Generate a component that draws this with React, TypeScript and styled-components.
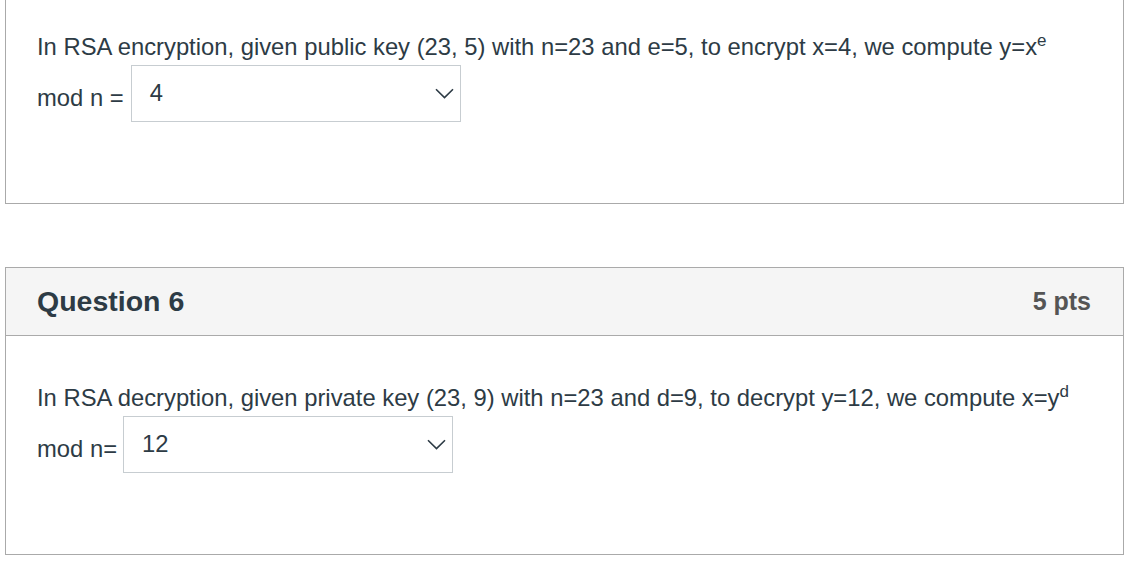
import React from "react";
import styled, { createGlobalStyle } from "styled-components";

const Global = createGlobalStyle`
  html, body { margin: 0; padding: 0; background: #ffffff; }
  body { font-family: "Liberation Sans", Arial, sans-serif; color: #2d3b45; }
`;

const Page = styled.div`
  padding: 0 2px 0 5px;
  display: flex;
  flex-direction: column;
  gap: 63px;
  margin-top: -16px;
`;

const Card = styled.section`
  border: 1px solid #aaaaaa;
  background: #ffffff;
`;

const Header = styled.header`
  display: flex;
  align-items: center;
  justify-content: space-between;
  height: 67px;
  padding: 0 32px 0 31px;
  background: #f5f5f5;
  border-bottom: 1px solid #aaaaaa;
`;

const Title = styled.h2`
  margin: 0;
  font-size: 28.5px;
  font-weight: 700;
  color: #2d3b45;
`;

const Points = styled.span`
  font-size: 25px;
  font-weight: 700;
  color: #555555;
`;

const Body = styled.div`
  padding: 48px 31px 81px 31px;
`;

const Prompt = styled.p`
  margin: 0;
  font-size: 23.8px;
  line-height: 28px;
  color: #2d3b45;
`;

const Sup = styled.sup`
  font-size: 17px;
  line-height: 0;
  vertical-align: 0.55em;
`;

const AnswerRow = styled.div`
  display: flex;
  align-items: flex-start;
  margin-top: 4px;
`;

const Label = styled.span<{ $gap: number }>`
  font-size: 23.8px;
  line-height: 28px;
  margin-top: 19px;
  margin-right: ${(p) => p.$gap}px;
  white-space: pre;
`;

const Select = styled.div`
  position: relative;
  box-sizing: border-box;
  width: 330px;
  height: 57px;
  border: 1px solid #c7cdd1;
  background: #ffffff;
  padding: 13px 0 0 18px;
  font-size: 23.8px;
  line-height: 28px;
  color: #2d3b45;
`;

const Chevron = styled.svg`
  position: absolute;
  right: 6px;
  top: 22px;
`;

function Dropdown({ value }: { value: string }) {
  return (
    <Select>
      {value}
      <Chevron width="19" height="11" viewBox="0 0 19 11">
        <path d="M1 1.2 L9.5 9.6 L18 1.2" fill="none" stroke="#2d3b45" strokeWidth="1.6" />
      </Chevron>
    </Select>
  );
}

export default function App() {
  return (
    <>
      <Global />
      <Page>
        <Card>
          <Body>
            <Prompt>
              In RSA encryption, given public key (23, 5) with n=23 and e=5, to encrypt x=4, we compute y=x<Sup>e</Sup>
            </Prompt>
            <AnswerRow>
              <Label $gap={7}>mod n =</Label>
              <Dropdown value="4" />
            </AnswerRow>
          </Body>
        </Card>
        <Card>
          <Header>
            <Title>Question 6</Title>
            <Points>5 pts</Points>
          </Header>
          <Body>
            <Prompt>
              In RSA decryption, given private key (23, 9) with n=23 and d=9, to decrypt y=12, we compute x=y<Sup>d</Sup>
            </Prompt>
            <AnswerRow>
              <Label $gap={6}>mod n=</Label>
              <Dropdown value="12" />
            </AnswerRow>
          </Body>
        </Card>
      </Page>
    </>
  );
}
